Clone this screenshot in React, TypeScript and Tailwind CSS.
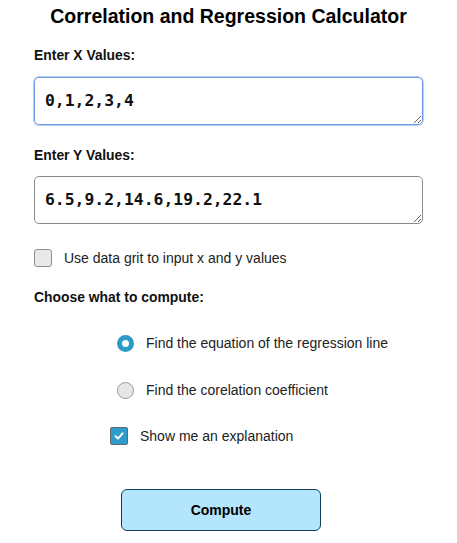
import React from "react";

const sans = { fontFamily: '"Liberation Sans", Arial, sans-serif' };
const mono = { fontFamily: '"DejaVu Sans Mono", "Liberation Mono", monospace' };

function Radio({ checked }: { checked: boolean }) {
  return checked ? (
    <span className="box-border block h-[17px] w-[17px] rounded-full border-[5px] border-[#2b9bc8] bg-white" />
  ) : (
    <span className="box-border block h-[17px] w-[17px] rounded-full border border-[#9a9a9a] bg-[#e6e6e6]" />
  );
}

export default function App() {
  return (
    <div className="w-[457px] bg-white px-[34px] pt-[4px] pb-[12px] text-[#111]" style={sans}>
      <h1 className="h-[24px] text-center text-[19.5px] font-bold leading-[24px] text-black">
        Correlation and Regression Calculator
      </h1>

      <div className="mt-[19px] h-[16px] text-[13.9px] font-bold leading-[16px]">Enter X Values:</div>
      <textarea
        defaultValue="0,1,2,3,4"
        className="mt-[14px] box-border block h-[48px] w-full resize-y rounded-[5px] border border-[#6d98e2] px-[10px] py-[11px] text-[16.4px] font-bold leading-[24px] text-[#111] shadow-[0_0_0_1px_rgba(110,150,225,0.45)] outline-none"
        style={mono}
      />

      <div className="mt-[22px] h-[16px] text-[13.9px] font-bold leading-[16px]">Enter Y Values:</div>
      <textarea
        defaultValue="6.5,9.2,14.6,19.2,22.1"
        className="mt-[13px] box-border block h-[48px] w-full resize-y rounded-[5px] border border-[#8a8a8a] px-[10px] py-[11px] text-[16.4px] font-bold leading-[24px] text-[#111] outline-none"
        style={mono}
      />

      <div className="mt-[25px] flex h-[18px] items-center">
        <span className="box-border block h-[18px] w-[18px] rounded-[3px] border border-[#8f8f8f] bg-[#e9e9e9]" />
        <span className="ml-[12px] text-[14px] leading-[18px] text-[#222]">Use data grit to input x and y values</span>
      </div>

      <div className="mt-[22px] h-[16px] text-[13.9px] font-bold leading-[16px]">Choose what to compute:</div>

      <div className="mt-[28px] flex h-[20px] items-center pl-[83px]">
        <Radio checked />
        <span className="ml-[12px] text-[14px] leading-[20px] text-[#222]">Find the equation of the regression line</span>
      </div>
      <div className="mt-[27px] flex h-[20px] items-center pl-[83px]">
        <Radio checked={false} />
        <span className="ml-[12px] text-[14px] leading-[20px] text-[#222]">Find the corelation coefficient</span>
      </div>
      <div className="mt-[26px] flex h-[20px] items-center pl-[76px]">
        <span className="box-border flex h-[18px] w-[18px] items-center justify-center rounded-[2px] border border-[#5d6a72] bg-[#2e9dcc]">
          <svg width="12" height="12" viewBox="0 0 12 12">
            <path d="M2.5 6.3 L5 8.6 L9.6 3.4" fill="none" stroke="#fff" strokeWidth="2" strokeLinecap="round" strokeLinejoin="round" />
          </svg>
        </span>
        <span className="ml-[12px] text-[14px] leading-[20px] text-[#222]">Show me an explanation</span>
      </div>

      <button
        className="mt-[43px] ml-[87px] box-border flex h-[42px] w-[200px] items-center justify-center rounded-[6px] border border-[#123f57] bg-[#b3e5fc] text-[14px] font-bold text-black"
        style={sans}
      >
        Compute
      </button>
    </div>
  );
}
